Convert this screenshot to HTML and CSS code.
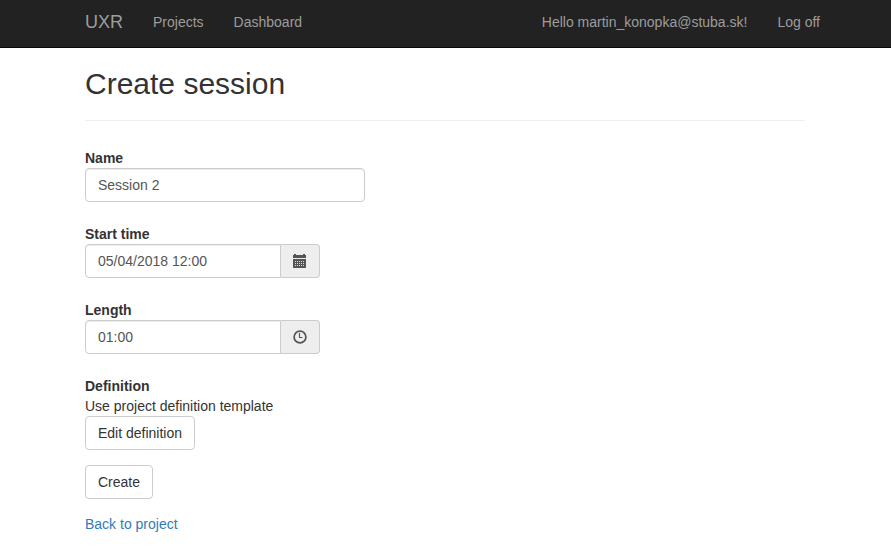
FILE: index.html
```html
<!DOCTYPE html>
<html lang="en">
<head>
<meta charset="utf-8">
<title>Create session - UXR</title>
<link rel="stylesheet" href="styles.css">
</head>
<body>
<nav class="navbar">
  <div class="navbar-inner">
    <a class="brand" href="#">UXR</a>
    <a class="nav-link" href="#">Projects</a>
    <a class="nav-link" href="#">Dashboard</a>
    <a class="nav-link nav-user" href="#">Hello martin_konopka@stuba.sk!</a>
    <a class="nav-link" href="#">Log off</a>
  </div>
</nav>
<main class="container">
  <h2>Create session</h2>
  <hr>
  <form>
    <div class="field">
      <label for="name">Name</label>
      <input class="control" id="name" type="text" value="Session 2">
    </div>
    <div class="field">
      <label for="start">Start time</label>
      <div class="group">
        <input class="control" id="start" type="text" value="05/04/2018 12:00">
        <span class="addon">
          <svg width="14" height="14" viewBox="0 0 14 14" fill="#555">
            <path d="M0 1h1V0h2v1h7V0h2v1h1v3H0zM0 5h13v8.5l-.5.5H.5L0 13.5z"/>
            <path d="M2 7.5h10M2 9.5h10M2 11.5h10" fill="none" stroke="#d8d8d8" stroke-dasharray="1 1"/>
          </svg>
        </span>
      </div>
    </div>
    <div class="field">
      <label for="length">Length</label>
      <div class="group">
        <input class="control" id="length" type="text" value="01:00">
        <span class="addon">
          <svg width="14" height="14" viewBox="0 0 14 14" fill="none" stroke="#555">
            <circle cx="7" cy="7" r="5.9" stroke-width="1.7"/>
            <path d="M6.5 3v4.5H9.5" stroke-width="1.1"/>
          </svg>
        </span>
      </div>
    </div>
    <div class="definition">
      <label>Definition</label>
      <div>Use project definition template</div>
      <button class="btn" type="button">Edit definition</button>
    </div>
    <button class="btn" type="button">Create</button>
  </form>
  <a class="back" href="#">Back to project</a>
</main>
</body>
</html>
```
FILE: styles.css
```css
* { box-sizing: border-box; }
body {
  margin: 0;
  font: 14px/20px "Liberation Sans", Arial, sans-serif;
  color: #333;
  background: #fff;
}
a { text-decoration: none; }
.navbar {
  height: 48px;
  background: #222;
  border-bottom: 1px solid #080808;
}
.navbar-inner {
  display: flex;
  width: 750px;
  margin-left: 85px;
  padding-top: 12px;
}
.brand {
  font-size: 18px;
  color: #9d9d9d;
  padding-right: 15px;
}
.nav-link {
  color: #9d9d9d;
  padding: 0 15px;
}
.nav-user { margin-left: auto; }
.container {
  width: 720px;
  margin-left: 85px;
}
h2 {
  margin: 0;
  padding-top: 19px;
  font-size: 30px;
  font-weight: 500;
  line-height: 33px;
}
hr {
  margin: 20px 0 27px;
  border: 0;
  border-top: 1px solid #eee;
}
.field { margin-bottom: 22px; }
label {
  display: block;
  font-weight: 700;
}
.control {
  display: block;
  width: 280px;
  height: 34px;
  padding: 6px 12px;
  font: inherit;
  color: #555;
  background: #fff;
  border: 1px solid #ccc;
  border-radius: 4px;
  box-shadow: inset 0 1px 1px rgba(0, 0, 0, .075);
}
.group {
  display: flex;
  width: 235px;
}
.group .control {
  width: 196px;
  border-radius: 4px 0 0 4px;
}
.addon {
  display: flex;
  align-items: center;
  width: 39px;
  height: 34px;
  padding-left: 12px;
  background: #eee;
  border: 1px solid #ccc;
  border-left: 0;
  border-radius: 0 4px 4px 0;
}
.definition { margin-bottom: 15px; }
.btn {
  display: block;
  height: 34px;
  padding: 6px 12px;
  font: inherit;
  color: #333;
  background: #fff;
  border: 1px solid #ccc;
  border-radius: 4px;
}
.back {
  display: inline-block;
  margin-top: 15px;
  color: #337ab7;
}
```
